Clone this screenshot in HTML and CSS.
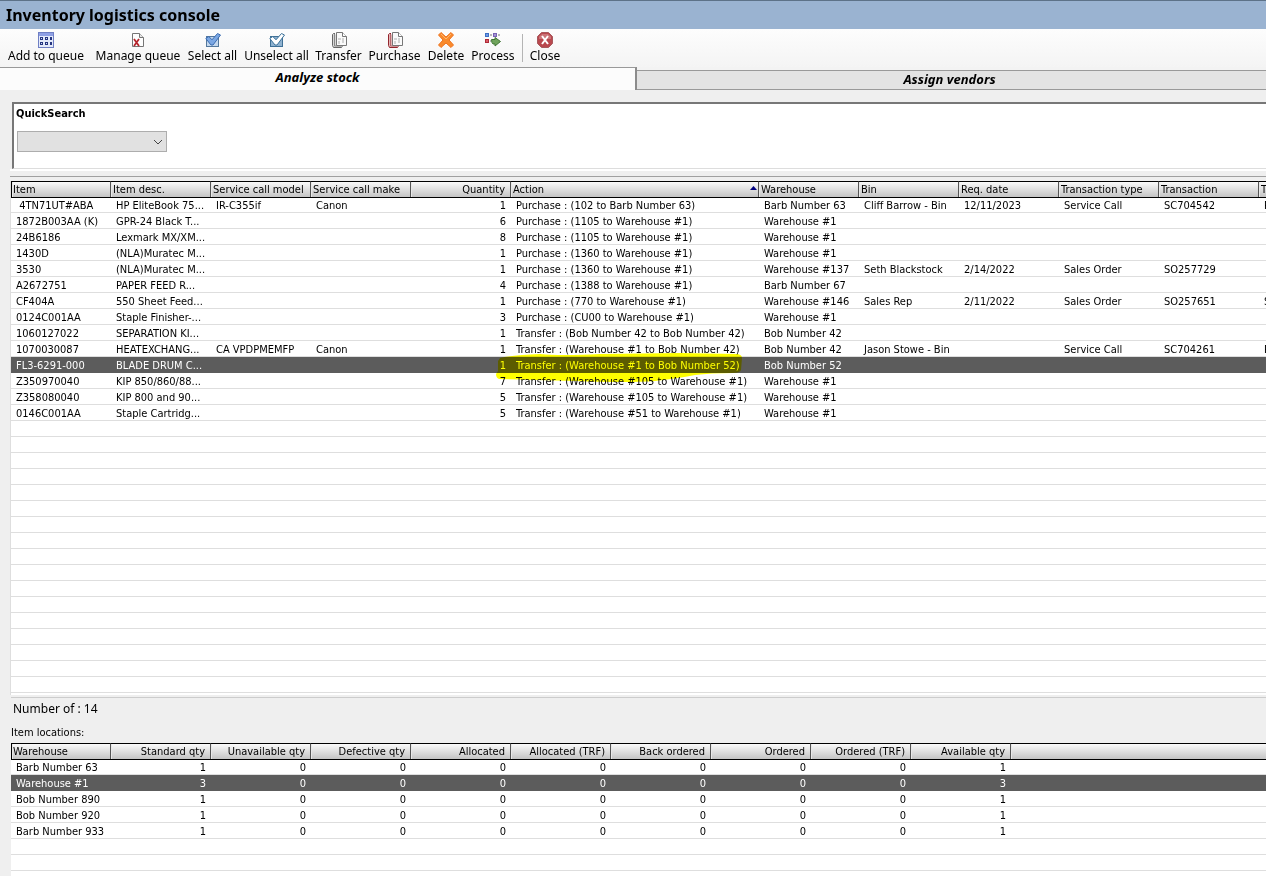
FILE: index.html
```html
<!DOCTYPE html>
<html lang="en">
<head>
  <meta charset="UTF-8" />
  <meta name="viewport" content="width=device-width, initial-scale=1.0"/>
  <title>Inventory logistics console</title>
  <link rel="stylesheet" href="styles.css">
</head>
<body>

  <h1 class="title">Inventory logistics console</h1>

  <div class="toolbar">
    <button type="button">
      <svg width="16" height="16" viewBox="0 0 16 16">
        <rect x="0.5" y="0.5" width="15" height="15" fill="#e4eafa" stroke="#6f7fc4"/>
        <path d="M1 1h14v3H1z" fill="#8fa0e4"/>
        <path d="M2 5h3v3H2zM7 5h3v3H7zM12 5h2v3h-2zM2 10h3v3H2zM7 10h3v3H7zM12 10h2v3h-2z" fill="#26367f"/>
        <path d="M3 6h1v1H3zM8 6h1v1H8zM3 11h1v1H3zM8 11h1v1H8z" fill="#cdd8f6"/>
      </svg>
      Add to queue
    </button>
    <button type="button">
      <svg width="16" height="16" viewBox="0 0 16 16">
        <path d="M2.5 1.5h7l4 4v9h-11z" fill="#fdfdfd" stroke="#757575"/>
        <path d="M9.5 1.5v4h4" fill="#e6e6e6" stroke="#757575"/>
        <path d="M4 7l5 7M9 7l-5 7" stroke="#b5242c" stroke-width="1.8"/>
      </svg>
      Manage queue
    </button>
    <button type="button">
      <svg width="16" height="16" viewBox="0 0 16 16">
        <rect x="1.5" y="4.500" width="12" height="10" fill="#c4d8ee" stroke="#54789c"/>
        <path d="M0.8 6.5l3-2 3.2 3.3L12.5 1.5l3 1.5L8 13H6z" fill="#7ba7e3" stroke="#3b6cb0"/>
      </svg>
      Select all
    </button>
    <button type="button">
      <svg width="16" height="16" viewBox="0 0 16 16">
        <rect x="1.5" y="4.5" width="12" height="10" fill="#8fb2d0" stroke="#3f7096"/>
        <path d="M0.8 6.5l3-2 3.2 3.3L12.5 1.5l3 1.5L8 13H6z" fill="#ffffff" stroke="#3b7099"/>
      </svg>
      Unselect all
    </button>
    <button type="button">
      <svg width="16" height="16" viewBox="0 0 16 16">
        <path d="M4 1.5H2.5l-1 1v11l1 2h8l1-1" fill="#d8d8d8" stroke="#666"/>
        <path d="M3.5 2v12h8" fill="none" stroke="#888"/>
        <path d="M5.5 0.5h6l4 4v9h-10z" fill="#fafafa" stroke="#777"/>
        <path d="M11.5 0.5v4h4" fill="#fff" stroke="#777"/>
        <path d="M7 6h3v2H7zM7 9h2v3H7zM11 6h2v5h-2z" fill="#d4d4d4"/>
      </svg>
      Transfer
    </button>
    <button type="button">
      <svg width="16" height="16" viewBox="0 0 16 16">
        <path d="M4 1.5H2.5l-1 1v11l1 2h8l1-1" fill="#e3b7b7" stroke="#94252d"/>
        <path d="M3.5 2v12h8" fill="none" stroke="#b76a6f"/>
        <path d="M5.5 0.5h6l4 4v9h-10z" fill="#fafafa" stroke="#777"/>
        <path d="M11.5 0.5v4h4" fill="#fff" stroke="#777"/>
        <path d="M7 6h3v2H7zM7 9h2v3H7zM11 6h2v5h-2z" fill="#d4d4d4"/>
      </svg>
      Purchase
    </button>
    <button type="button">
      <svg width="16" height="16" viewBox="0 0 16 16">
        <path d="M3 0.5L8 5l5-4.500 2.500 2.500L11 8l4.500 5-2.500 2.500L8 11l-5 4.500L0.500 13 5 8 0.500 3z" fill="#f98a2c" stroke="#ee7420"/>
        <path d="M3 2l5 5 5-5" fill="none" stroke="#ffb56b"/>
      </svg>
      Delete
    </button>
    <button type="button">
      <svg width="16" height="16" viewBox="0 0 16 16">
        <rect x="0.5" y="1.5" width="3" height="3" fill="#6d9ae8" stroke="#3c6fc4"/>
        <rect x="8.5" y="1.5" width="3" height="3" fill="#a493d4" stroke="#7863b4"/>
        <rect x="0.5" y="7.5" width="3" height="3" fill="#d95a64" stroke="#ad2b38"/>
        <path d="M5 3h2M13 3h2M5 9h1" stroke="#777"/>
        <path d="M6.5 7.500H10V5.500l5.500 4-5.500 4.500v-2H8q-1.500-1-1.500-4.500z" fill="#6fa35b" stroke="#3e7433"/>
      </svg>
      Process
    </button>
    <span class="separator"></span>
    <button type="button">
      <svg width="16" height="16" viewBox="0 0 16 16">
        <path d="M4.5 0.5h7l4 4v7l-4 4h-7l-4-4v-7z" fill="#b9484e" stroke="#a7595d"/>
        <path d="M2 4.5L5 2h6l3 2.500V7H2z" fill="#cb7478"/>
        <path d="M5 4l6 8M11 4l-6 8" stroke="#fff" stroke-width="2"/>
      </svg>
      Close
    </button>
  </div>

  <div class="tabs">
    <button type="button" class="tab active">Analyze stock</button>
    <button type="button" class="tab">Assign vendors</button>
  </div>

  <div class="search">
    <label for="quickSearch">QuickSearch</label>
    <div class="select-box">
      <select id="quickSearch"></select>
      <svg class="chevron" width="10" height="6" viewBox="0 0 10 6">
        <path d="M1 1l4 4 4-4" fill="none" stroke="#444"/>
      </svg>
    </div>
  </div>

  <hr class="splitter">

  <div class="grid stock-grid">
    <table class="stock">
      <colgroup>
        <col><col><col><col><col><col class="wide"><col><col><col><col><col><col>
      </colgroup>
      <thead>
        <tr>
          <th>Item</th><th>Item desc.</th><th>Service call model</th><th>Service call make</th><th class="num">Quantity</th>
          <th><span class="sorted">Action <svg width="7" height="4" viewBox="0 0 7 4"><path d="M0 4l3.500-4L7 4z" fill="#000080"/></svg></span></th>
          <th>Warehouse</th><th>Bin</th><th>Req. date</th><th>Transaction type</th><th>Transaction</th><th>T</th>
        </tr>
      </thead>
      <tbody>
        <tr><td>&nbsp;4TN71UT#ABA</td><td>HP EliteBook 75...</td><td>IR-C355if</td><td>Canon</td><td class="num">1</td><td>Purchase : (102 to Barb Number 63)</td><td>Barb Number 63</td><td>Cliff Barrow - Bin</td><td>12/11/2023</td><td>Service Call</td><td>SC704542</td><td>R</td></tr>
        <tr><td>1872B003AA (K)</td><td>GPR-24 Black T...</td><td></td><td></td><td class="num">6</td><td>Purchase : (1105 to Warehouse #1)</td><td>Warehouse #1</td><td></td><td></td><td></td><td></td><td></td></tr>
        <tr><td>24B6186</td><td>Lexmark MX/XM...</td><td></td><td></td><td class="num">8</td><td>Purchase : (1105 to Warehouse #1)</td><td>Warehouse #1</td><td></td><td></td><td></td><td></td><td></td></tr>
        <tr><td>1430D</td><td>(NLA)Muratec M...</td><td></td><td></td><td class="num">1</td><td>Purchase : (1360 to Warehouse #1)</td><td>Warehouse #1</td><td></td><td></td><td></td><td></td><td></td></tr>
        <tr><td>3530</td><td>(NLA)Muratec M...</td><td></td><td></td><td class="num">1</td><td>Purchase : (1360 to Warehouse #1)</td><td>Warehouse #137</td><td>Seth Blackstock</td><td>2/14/2022</td><td>Sales Order</td><td>SO257729</td><td></td></tr>
        <tr><td>A2672751</td><td>PAPER FEED R...</td><td></td><td></td><td class="num">4</td><td>Purchase : (1388 to Warehouse #1)</td><td>Barb Number 67</td><td></td><td></td><td></td><td></td><td></td></tr>
        <tr><td>CF404A</td><td>550 Sheet Feed...</td><td></td><td></td><td class="num">1</td><td>Purchase : (770 to Warehouse #1)</td><td>Warehouse #146</td><td>Sales Rep</td><td>2/11/2022</td><td>Sales Order</td><td>SO257651</td><td>S</td></tr>
        <tr><td>0124C001AA</td><td>Staple Finisher-...</td><td></td><td></td><td class="num">3</td><td>Purchase : (CU00 to Warehouse #1)</td><td>Warehouse #1</td><td></td><td></td><td></td><td></td><td></td></tr>
        <tr><td>1060127022</td><td>SEPARATION KI...</td><td></td><td></td><td class="num">1</td><td>Transfer : (Bob Number 42 to Bob Number 42)</td><td>Bob Number 42</td><td></td><td></td><td></td><td></td><td></td></tr>
        <tr><td>1070030087</td><td>HEATEXCHANG...</td><td>CA VPDPMEMFP</td><td>Canon</td><td class="num">1</td><td>Transfer : (Warehouse #1 to Bob Number 42)</td><td>Bob Number 42</td><td>Jason Stowe - Bin</td><td></td><td>Service Call</td><td>SC704261</td><td>R</td></tr>
        <tr class="selected"><td>FL3-6291-000</td><td>BLADE DRUM C...</td><td></td><td></td><td class="num">1</td><td>Transfer : (Warehouse #1 to Bob Number 52)</td><td>Bob Number 52</td><td></td><td></td><td></td><td></td><td></td></tr>
        <tr><td>Z350970040</td><td>KIP 850/860/88...</td><td></td><td></td><td class="num">7</td><td>Transfer : (Warehouse #105 to Warehouse #1)</td><td>Warehouse #1</td><td></td><td></td><td></td><td></td><td></td></tr>
        <tr><td>Z358080040</td><td>KIP 800 and 90...</td><td></td><td></td><td class="num">5</td><td>Transfer : (Warehouse #105 to Warehouse #1)</td><td>Warehouse #1</td><td></td><td></td><td></td><td></td><td></td></tr>
        <tr><td>0146C001AA</td><td>Staple Cartridg...</td><td></td><td></td><td class="num">5</td><td>Transfer : (Warehouse #51 to Warehouse #1)</td><td>Warehouse #1</td><td></td><td></td><td></td><td></td><td></td></tr>
      </tbody>
    </table>
    <!-- yellow marker over the selected action -->
    <svg class="marker" width="248" height="30" viewBox="0 0 248 30">
      <path d="M4 5q12-3 40-4 20 2 60 0l80-1 58 1q4 1 4 4l-1 12q-1 3-8 3-22 0-38 2-14 3-40 6-28 2-80 0L3 26q-3-1-3-5l2-3V8z" fill="#ffff00"/>
    </svg>
  </div>

  <div class="footer">
    <p class="count">Number of : 14</p>
    <p class="caption">Item locations:</p>
    <div class="grid location-grid">
      <table class="locations">
        <colgroup>
          <col><col><col><col><col><col><col><col><col><col><col class="rest">
        </colgroup>
        <thead>
          <tr><th>Warehouse</th><th class="num">Standard qty</th><th class="num">Unavailable qty</th><th class="num">Defective qty</th><th class="num">Allocated</th><th class="num">Allocated (TRF)</th><th class="num">Back ordered</th><th class="num">Ordered</th><th class="num">Ordered (TRF)</th><th class="num">Available qty</th><th></th></tr>
        </thead>
        <tbody>
          <tr><td>Barb Number 63</td><td class="num">1</td><td class="num">0</td><td class="num">0</td><td class="num">0</td><td class="num">0</td><td class="num">0</td><td class="num">0</td><td class="num">0</td><td class="num">1</td><td></td></tr>
          <tr class="selected"><td>Warehouse #1</td><td class="num">3</td><td class="num">0</td><td class="num">0</td><td class="num">0</td><td class="num">0</td><td class="num">0</td><td class="num">0</td><td class="num">0</td><td class="num">3</td><td></td></tr>
          <tr><td>Bob Number 890</td><td class="num">1</td><td class="num">0</td><td class="num">0</td><td class="num">0</td><td class="num">0</td><td class="num">0</td><td class="num">0</td><td class="num">0</td><td class="num">1</td><td></td></tr>
          <tr><td>Bob Number 920</td><td class="num">1</td><td class="num">0</td><td class="num">0</td><td class="num">0</td><td class="num">0</td><td class="num">0</td><td class="num">0</td><td class="num">0</td><td class="num">1</td><td></td></tr>
          <tr><td>Barb Number 933</td><td class="num">1</td><td class="num">0</td><td class="num">0</td><td class="num">0</td><td class="num">0</td><td class="num">0</td><td class="num">0</td><td class="num">0</td><td class="num">1</td><td></td></tr>
        </tbody>
      </table>
    </div>
  </div>

</body>
</html>
```

FILE: styles.css
```css
* {
  box-sizing: border-box;
}

body {
  margin: 0;
  height: 100vh;
  display: flex;
  flex-direction: column;
  overflow: hidden;
  background-color: #efefef;
  color: #000;
  font-family: Tahoma, "DejaVu Sans Condensed", "Noto Sans", sans-serif;
  font-size: 11px;
}

button {
  font-family: "Segoe UI", "Noto Sans", sans-serif;
  color: #000;
  border: none;
  padding: 0;
}

.title {
  margin: 0;
  padding-left: 6px;
  border-top: 1px solid #5d7288;
  background-color: #9ab3d1;
  font-family: "Segoe UI", "Noto Sans", sans-serif;
  font-size: 16px;
  line-height: 28px;
}

/* Toolbar */
.toolbar {
  display: grid;
  grid-template-columns: 92px 92px 57px 71px 53px 59px 44px 50px 8px 38px;
  height: 38px;
  padding-top: 3px;
  background: linear-gradient(#fdfdfd, #f4f4f4);
}

.toolbar button {
  display: flex;
  flex-direction: column;
  align-items: center;
  background: none;
  font-size: 12px;
  line-height: 16px;
  white-space: nowrap;
}

.separator {
  width: 1px;
  height: 28px;
  margin: 2px auto 0;
  background-color: #b4b4b4;
}

/* Tabs */
.tabs {
  display: grid;
  grid-template-columns: 1fr 1fr;
  align-items: end;
  height: 23px;
  background-color: #f3f3f3;
}

.tab {
  height: 20px;
  padding-bottom: 2px;
  border-top: 1px solid #999;
  border-bottom: 1px solid #999;
  background-color: #e3e3e3;
  font-size: 13px;
  line-height: 16px;
  font-weight: bold;
  font-style: italic;
}

.tab.active {
  height: 23px;
  padding-bottom: 4px;
  margin-right: -4px;
  border-right: 2px solid #8c8c8c;
  border-bottom: none;
  background-color: #fcfcfc;
  z-index: 1;
}

/* Quick search */
.search {
  height: 67px;
  margin: 12px 0 0 12px;
  padding: 2px;
  border: solid #777;
  border-width: 2px 0 1px 2px;
  border-bottom-color: #ddd;
  background-color: #fff;
}

.search label {
  display: block;
  font-weight: bold;
  line-height: 16px;
}

.select-box {
  position: relative;
  width: 150px;
  margin: 9px 0 0 1px;
}

.select-box select {
  display: block;
  width: 100%;
  height: 21px;
  appearance: none;
  border: 1px solid #adadad;
  border-radius: 0;
  background-color: #e1e1e1;
}

.chevron {
  position: absolute;
  right: 4px;
  top: 8px;
  pointer-events: none;
}

.splitter {
  width: auto;
  height: 8px;
  margin: 0 0 0 10px;
  border: solid #fff;
  border-width: 2px 0 0;
  border-bottom: 1px solid #a0a0a0;
}

/* Grids, row lines carry on below the last row */
.grid {
  position: relative;
  overflow: hidden;
  background: repeating-linear-gradient(#fff 0, #fff 15px, #dedede 15px, #dedede 16px);
}

.grid table {
  width: 100%;
  table-layout: fixed;
  border-collapse: separate;
  border-spacing: 0;
}

.grid col {
  width: 100px;
}

.grid col.wide {
  width: 248px;
}

.grid col.rest {
  width: auto;
}

.grid th,
.grid td {
  height: 16px;
  padding: 0 5px;
  line-height: 15px;
  text-align: left;
  font-weight: normal;
  white-space: nowrap;
  overflow: hidden;
}

.grid thead tr {
  box-shadow: 0 1px 0 #000;
}

.grid th {
  padding: 0 5px 0 2px;
  border-top: 1px solid #000;
  border-right: 1px solid #555;
  background: linear-gradient(#fafafa, #c4c4c4);
  box-shadow: inset 1px 0 0 #e8e8e8;
}

.grid th:first-child {
  border-left: 1px solid #000;
  padding-left: 1px;
}

.grid th:last-child {
  border-right: none;
}

.grid .num {
  text-align: right;
}

.grid .selected td {
  background-color: #5c5c5c;
  color: #fff;
}

.sorted {
  display: flex;
  justify-content: space-between;
  align-items: center;
  margin-right: -4px;
}

.sorted svg {
  margin-bottom: 3px;
}

.stock-grid {
  flex: 1;
  margin: 4px 0 2px 10px;
  border-left: 1px solid #dedede;
}

.grid .stock {
  width: 1348px;
}

.marker {
  position: absolute;
  left: 485px;
  top: 172px;
  mix-blend-mode: multiply;
}

/* Locations */
.footer {
  padding-left: 11px;
}

.footer p {
  margin: 0;
}

.count {
  padding: 3px 2px 0;
  border-top: 1px solid #ccc;
  font-family: "Segoe UI", "Noto Sans", sans-serif;
  font-size: 12px;
  line-height: 16px;
}

.caption {
  padding: 8px 0 2px;
  line-height: 16px;
}

.location-grid {
  height: 133px;
}
```
